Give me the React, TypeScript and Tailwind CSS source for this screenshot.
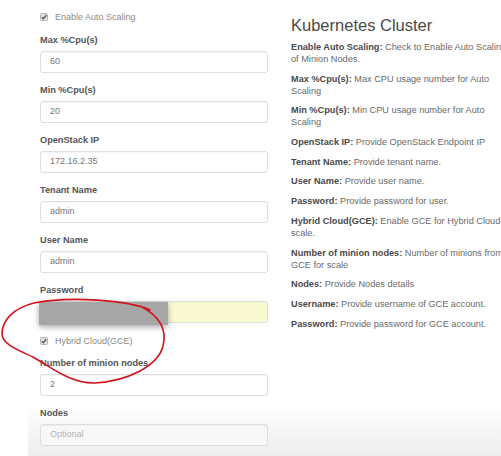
import React from "react";

const font = { fontFamily: '"Liberation Sans", Arial, sans-serif' };

// small greyed-out checked box
function Check() {
  return (
    <svg width="8" height="8" viewBox="0 0 8 8" className="shrink-0">
      <rect x="0.5" y="0.5" width="7" height="7" rx="1" fill="#e2e2e2" stroke="#b5b5b5" />
      <path d="M1.8 4.2 L3.3 5.7 L6.3 2.2" fill="none" stroke="#5a5a5a" strokeWidth="1.4" />
    </svg>
  );
}

function CheckRow({ label, className }: { label: string; className?: string }) {
  return (
    <div className={"flex items-center gap-[7px] h-[12px] " + (className ?? "")}>
      <Check />
      <span className="text-[9px] text-[#8a8a8a] leading-[12px]">{label}</span>
    </div>
  );
}

function Field({
  label,
  value,
  placeholder,
  className,
  children,
  inputClass,
}: {
  label: string;
  value?: string;
  placeholder?: string;
  className?: string;
  children?: React.ReactNode;
  inputClass?: string;
}) {
  return (
    <div className={className ?? "mb-[11px]"}>
      <div className="h-[12px] text-[9.2px] leading-[12px] font-bold text-[#555]">{label}</div>
      <div
        className={
          "relative mt-[5px] h-[22px] rounded-[3px] border border-[#dedede] flex items-center pl-[9px] text-[9px] shadow-[inset_0_1px_1px_rgba(0,0,0,0.04)] " +
          (inputClass ?? "bg-white")
        }
      >
        {value && <span className="text-[#777]">{value}</span>}
        {placeholder && <span className="text-[#b4b4b4]">{placeholder}</span>}
        {children}
      </div>
    </div>
  );
}

const help: [string, string][] = [
  ["Enable Auto Scaling:", "Check to Enable Auto Scaling of Minion Nodes."],
  ["Max %Cpu(s):", "Max CPU usage number for Auto Scaling"],
  ["Min %Cpu(s):", "Min CPU usage number for Auto Scaling"],
  ["OpenStack IP:", "Provide OpenStack Endpoint IP"],
  ["Tenant Name:", "Provide tenant name."],
  ["User Name:", "Provide user name."],
  ["Password:", "Provide password for user."],
  ["Hybrid Cloud(GCE):", "Enable GCE for Hybrid Cloud scale."],
  ["Number of minion nodes:", "Number of minions from GCE for scale"],
  ["Nodes:", "Provide Nodes details"],
  ["Username:", "Provide username of GCE account."],
  ["Password:", "Provide password for GCE account."],
];

export default function App() {
  return (
    <div className="relative w-[501px] h-[456px] overflow-hidden bg-white" style={font}>
      <div className="ml-[28px] h-full flex bg-[linear-gradient(to_bottom,#ffffff_0px,#ffffff_405px,#ededed_456px)]">
        {/* form column */}
        <div className="w-[240px] shrink-0 pl-[12px] pt-[11px]">
          <CheckRow label="Enable Auto Scaling" className="mb-[11px]" />
          <Field label="Max %Cpu(s)" value="60" />
          <Field label="Min %Cpu(s)" value="20" />
          <Field label="OpenStack IP" value="172.16.2.35" />
          <Field label="Tenant Name" value="admin" />
          <Field label="User Name" value="admin" />
          <Field label="Password" inputClass="bg-[#fafad2]" className="mb-[12px]">
            <div className="absolute left-[-2px] top-0 w-[129px] h-[23px] bg-[#a7a7a7] shadow-[0_2px_6px_rgba(0,0,0,0.35)] blur-[0.5px]" />
          </Field>
          <CheckRow label="Hybrid Cloud(GCE)" className="mb-[10px]" />
          <Field label="Number of minion nodes" value="2" />
          <Field label="Nodes" placeholder="Optional" inputClass="bg-[#f8f8f8]" />
        </div>

        {/* help column */}
        <div className="w-[219px] shrink-0 ml-[23px] pt-[15px]">
          <h2 className="text-[16.5px] leading-[20px] text-[#4a4a4a] mb-[6px]">Kubernetes Cluster</h2>
          {help.map(([b, t], i) => (
            <p key={i} className="text-[9.2px] leading-[12px] text-[#6a6a6a] mb-[7.7px]">
              <span className="font-bold text-[#4a4a4a]">{b}</span> {t}
            </p>
          ))}
        </div>
      </div>

      {/* red hand-drawn circle */}
      <svg className="absolute left-0 top-0 pointer-events-none" width="501" height="456" viewBox="0 0 501 456">
        <path
          d="M150 310 C128 300 70 296 34 303 C14 308 2 320 2 334 C2 344 18 350 33 357 C52 368 72 384 95 383 C128 381 158 366 163 346 C167 330 160 316 140 306"
          fill="none"
          stroke="#d0141c"
          strokeWidth="1.6"
          strokeLinecap="round"
        />
      </svg>
    </div>
  );
}
